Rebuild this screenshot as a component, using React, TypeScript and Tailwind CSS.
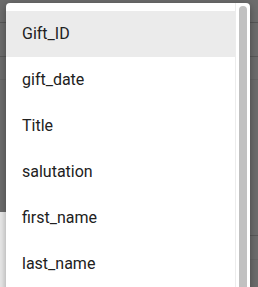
const fields = ["Gift_ID", "gift_date", "Title", "salutation", "first_name", "last_name"];

function Backdrop() {
  return (
    <div className="flex flex-col h-full">
      <div className="h-[23px] border-b border-[#575757]" />
      <div className="h-[34px] border-b border-[#5a5a5a]" />
      <div className="h-[23px] border-b border-[#666666]" />
      <div className="h-[132px]" />
      <div className="flex flex-1">
        <div className="w-[6px] bg-[#ececec]" />
        <div className="flex-1 flex flex-col">
          <div className="h-[24px] border-b border-[#5a5a5a]" />
          <div className="h-[24px] border-b border-[#676767]" />
        </div>
      </div>
    </div>
  );
}

export default function App() {
  return (
    <div
      className="relative w-[258px] h-[287px] overflow-hidden bg-[#6d6d6d]"
      style={{ fontFamily: "Roboto, 'Liberation Sans', sans-serif" }}
    >
      <Backdrop />
      <div className="absolute left-[6px] top-[3px] w-[244px] h-[300px] bg-white rounded-t-[4px] shadow-[0_2px_8px_rgba(0,0,0,0.35)] flex">
        <ul className="flex-1 pt-[8px] flex flex-col">
          {fields.map((f, i) => (
            <li
              key={f}
              className={
                i === 0
                  ? "h-[46px] px-4 flex items-center text-[16px] text-[#212121] bg-[#ebebeb]"
                  : "h-[46px] px-4 flex items-center text-[16px] text-[#212121]"
              }
            >
              {f}
            </li>
          ))}
        </ul>
        <div className="w-[15px] border-l border-[#ececec] pl-[3px] pr-[3px] pt-[3px]">
          <div className="h-full bg-[#c1c1c1] rounded-t-[4px]" />
        </div>
      </div>
    </div>
  );
}
